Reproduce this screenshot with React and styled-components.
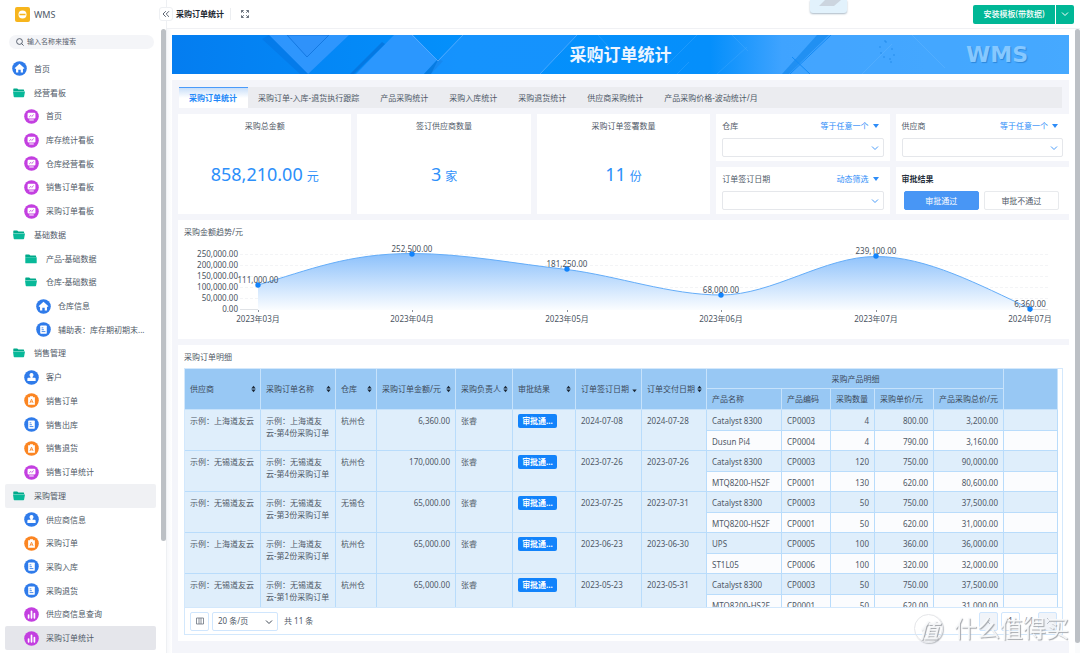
import React from "react";
import styled, { createGlobalStyle, css } from "styled-components";

const GlobalStyle = createGlobalStyle`
  *, *::before, *::after { box-sizing: border-box; }
  body {
    margin: 0;
    background: #fff;
    color: #4f5967;
    font: 8px/12px "Noto Sans", "Noto Sans CJK SC", sans-serif;
  }
  button, select, input { font: inherit; color: inherit; margin: 0; }
  button { cursor: pointer; }
  a { color: inherit; text-decoration: none; }
  svg { display: block; flex: none; }
  h1, h2, p { margin: 0; font-size: inherit; font-weight: inherit; }
`;

const Shell = styled.div`
  display: flex;
  height: 100vh;
  overflow: hidden;
`;

/* ---------- sidebar ---------- */
const Sidebar = styled.aside`
  display: flex;
  flex: none;
  width: 167px;
  border-right: 1px solid #eef0f3;
`;
const SideBody = styled.div`
  display: flex;
  flex-direction: column;
  flex: 1;
  min-width: 0;
  padding: 0 5px 3px;
`;
const Brand = styled.div`
  display: flex;
  align-items: center;
  gap: 4px;
  height: 29px;
  padding-left: 10px;
  font-size: 9px;
  flex: none;
`;
const SearchBox = styled.label`
  display: flex;
  align-items: center;
  gap: 3px;
  flex: none;
  height: 14px;
  margin: 6px 2px 8px 4px;
  padding: 0 7px;
  border-radius: 7px;
  background: #f4f5f8;
`;
const SearchInput = styled.input`
  flex: 1;
  min-width: 0;
  padding: 0;
  border: 0;
  outline: 0;
  background: none;
  font-size: 7px;
  line-height: 12px;
  &::placeholder { color: #59626e; opacity: 1; }
`;
const Nav = styled.nav`
  display: flex;
  flex-direction: column;
  flex: 1;
  min-height: 0;
`;
const NavItem = styled.a`
  display: flex;
  align-items: center;
  flex: 1 1 0;
  gap: 7px;
  padding-left: ${(p) => 7 + p.$level * 12}px;
  border-radius: 2px;
  background: ${(p) => p.$bg || "transparent"};
  white-space: nowrap;
`;
const Track = styled.div`
  flex: none;
  width: 5px;
  padding-top: 29px;
`;
const Thumb = styled.div`
  height: ${(p) => p.$size};
  border-radius: 3px;
  background: #bcc0c5;
`;

/* ---------- main ---------- */
const Main = styled.main`
  display: flex;
  flex-direction: column;
  flex: 1;
  min-width: 0;
`;
const TopBar = styled.header`
  position: relative;
  display: flex;
  align-items: center;
  flex: none;
  height: 29px;
  padding: 0 6px 0 9px;
  border-bottom: 1px solid #f0f1f4;
`;
const Collapse = styled.button`
  position: absolute;
  left: -8px;
  top: 7px;
  display: grid;
  place-items: center;
  width: 14px;
  height: 14px;
  padding: 0;
  border: 1px solid #eef0f3;
  border-radius: 3px;
  background: #fff;
`;
const PageName = styled.h1`
  padding-right: 6px;
  border-right: 1px solid #eceef1;
  color: #1c2530;
  font-weight: 700;
`;
const PlainButton = styled.button`
  display: flex;
  padding: 0;
  border: 0;
  background: none;
  margin-left: 10px;
`;
const Pull = styled.div`
  position: absolute;
  left: 643px;
  top: 0;
  width: 37px;
  height: 13px;
  border-radius: 0 0 3px 3px;
  background: #e2f2fc;
  box-shadow: 0 1px 2px #aab9c6;
`;
const Install = styled.div`
  display: flex;
  gap: 1px;
  margin-left: auto;
`;
const GreenButton = styled.button`
  display: grid;
  place-items: center;
  width: ${(p) => p.$w}px;
  height: 19px;
  padding: 0;
  border: 0;
  border-radius: ${(p) => p.$radius};
  background: #00b796;
  color: #fff;
  font-weight: 500;
`;
const Scroller = styled.div`
  display: flex;
  flex: 1;
  min-height: 0;
`;
const Content = styled.div`
  display: flex;
  flex-direction: column;
  flex: 1;
  min-width: 0;
  padding: 6px 6px 0 5px;
  background: linear-gradient(90deg, #f7f8fb, #fff 5px);
`;
const RightTrack = styled.div`
  flex: none;
  width: 5px;
  padding-bottom: 10px;
  background: #fafbfc;
`;
const Banner = styled.section`
  position: relative;
  display: grid;
  place-items: center;
  flex: none;
  height: 39px;
  overflow: hidden;
  background: linear-gradient(90deg, #047df0, #0490fb 32%, #058ffb 60%, #3fa3ff 68%, #47adff);
`;
const BannerArt = styled.svg`
  position: absolute;
  inset: 0;
  width: 100%;
  height: 100%;
`;
const BannerTitle = styled.h2`
  position: relative;
  color: #edf5ff;
  font-size: 17px;
  line-height: 24px;
  font-weight: 700;
`;
const BannerMark = styled.span`
  position: absolute;
  right: 41px;
  top: 8px;
  color: #86c8ff;
  font: 700 22px/24px "DejaVu Sans", sans-serif;
  text-shadow: 1px 1px 1px #2b87dc;
`;
const Board = styled.div`
  display: flex;
  flex-direction: column;
  flex: 1;
  min-height: 0;
  gap: 6px;
  margin-top: 6px;
  padding: 7px 0 12px 6px;
  background: #f4f5fa;
`;
const Tabs = styled.div`
  display: flex;
  flex: none;
  height: 21px;
  margin: 0 7px 0 1px;
  background: #ebecf0;
`;
const Tab = styled.button`
  padding: 0 11px 0 10px;
  border: 0;
  background: none;
  white-space: nowrap;
  ${(p) =>
    p.$active &&
    css`
      border-top: 1px solid #4b9bfa;
      background: linear-gradient(#c9dff9, #fff 10px);
      color: #2388f8;
      font-weight: 700;
    `}
`;
const Summary = styled.div`
  display: grid;
  flex: none;
  grid-template-columns: repeat(5, minmax(0, 1fr));
  grid-template-rows: 47px 47px;
  gap: 6px;
`;
const Card = styled.section`
  background: #fff;
  min-width: 0;
`;
const StatCard = styled(Card)`
  grid-row: span 2;
  padding-top: 6px;
  text-align: center;
`;
const StatValue = styled.p`
  margin-top: 30px;
  color: #2d8ffa;
  font-size: 18px;
  line-height: 24px;
`;
const Unit = styled.span`
  margin-left: 4px;
  font-size: 12px;
`;
const FilterCard = styled(Card)`
  padding: 6px 6px 0;
`;
const FilterHead = styled.div`
  display: flex;
  justify-content: space-between;
  align-items: center;
  height: 12px;
  margin-bottom: 6px;
  font-weight: ${(p) => (p.$strong ? 700 : 400)};
  color: ${(p) => (p.$strong ? "#27303c" : "inherit")};
`;
const Mode = styled.button`
  display: flex;
  align-items: center;
  gap: 4px;
  padding: 0 5px 0 0;
  border: 0;
  background: none;
  color: #2d8cf8;
`;
const SelectWrap = styled.div`
  position: relative;
  width: ${(p) => p.$w || "100%"};
  > svg { position: absolute; right: 5px; top: 6px; pointer-events: none; }
`;
const Select = styled.select`
  display: block;
  width: 100%;
  height: 19px;
  padding: 0 5px;
  border: 1px solid ${(p) => p.$line || "#e5e7eb"};
  border-radius: 2px;
  background: #fff;
  appearance: none;
`;
const Choices = styled.div`
  display: grid;
  grid-template-columns: 1fr 1fr;
  gap: 5px;
  padding: 0 4px 0 2px;
`;
const Choice = styled.button`
  height: 19px;
  padding: 0;
  border: 1px solid ${(p) => (p.$on ? "#4896f5" : "#e8eaed")};
  border-radius: 2px;
  background: ${(p) => (p.$on ? "#4896f5" : "#fff")};
  color: ${(p) => (p.$on ? "#fff" : "inherit")};
`;
const ChartCard = styled(Card)`
  flex: none;
`;
const CardTitle = styled.h2`
  padding: 6px 6px 0;
  height: 23px;
`;
const Chart = styled.svg`
  width: 100%;
  height: auto;
`;
const DetailCard = styled(Card)`
  display: flex;
  flex-direction: column;
  flex: 1;
  min-height: 0;
  padding: 0 6px 6px;
  h2 { padding-left: 0; flex: none; }
`;
const TableFrame = styled.div`
  display: flex;
  flex-direction: column;
  flex: 1;
  min-height: 0;
  border: 1px solid #d3e8fc;
`;
const TableScroll = styled.div`
  flex: 1;
  min-height: 0;
  padding-right: 4px;
  overflow: hidden;
`;
const Table = styled.table`
  width: 100%;
  table-layout: fixed;
  border-collapse: separate;
  border-spacing: 0;
`;
const Row = styled.tr`
  height: ${(p) => p.$h}px;
`;
const Th = styled.th`
  padding: 0 4px 0 5px;
  border-right: 1px solid #c6e2fb;
  border-bottom: 1px solid #c6e2fb;
  background: #98c8f4;
  color: #3c4a5b;
  font-weight: 400;
  text-align: ${(p) => (p.$center ? "center" : "left")};
  white-space: nowrap;
`;
const ThInner = styled.div`
  display: flex;
  align-items: center;
  justify-content: space-between;
`;
const Td = styled.td`
  padding: ${(p) => (p.$tag ? 4 : 5)}px 5px 0;
  border-right: 1px solid #b9dcfb;
  border-bottom: 1px solid #b9dcfb;
  background: ${(p) => (p.$light ? "#fbfcfe" : "#dfeefb")};
  text-align: ${(p) => (p.$num ? "right" : "left")};
  vertical-align: top;
  white-space: nowrap;
`;
const Tag = styled.span`
  display: grid;
  place-items: center;
  width: 39px;
  height: 14px;
  border-radius: 2px;
  background: #1283fb;
  color: #fff;
  font-weight: 700;
`;
const Footer = styled.div`
  display: flex;
  align-items: center;
  flex: none;
  gap: 3px;
  height: 27px;
  padding: 0 5px;
  border-top: 1px solid #d3e8fc;
`;
const PageButton = styled.button`
  display: grid;
  place-items: center;
  width: 19px;
  height: 19px;
  padding: 0;
  border: 1px solid #d0e6fd;
  border-radius: 2px;
  background: ${(p) => (p.$soft ? "#f1f4f9" : "#fff")};
`;
const Total = styled.span`
  margin: 0 auto 0 3px;
`;
const PageCount = styled.span`
  width: 12px;
  text-align: center;
  color: #8a929c;
`;
const Watermark = styled.div`
  position: fixed;
  right: 11px;
  bottom: 9px;
  display: flex;
  align-items: center;
  gap: 11px;
  color: rgba(250, 251, 252, 0.9);
  font-size: 23px;
  line-height: 32px;
  text-shadow: 1px 1px 1px #a3a6ab;
  pointer-events: none;
`;
const Seal = styled.span`
  display: grid;
  place-items: center;
  width: 29px;
  height: 29px;
  border: 1px solid #e4e5e8;
  border-radius: 50%;
  box-shadow: 1px 1px 1px #bfc2c7;
  font-size: 20px;
  font-style: italic;
  font-weight: 700;
`;

/* ---------- icons ---------- */
const COLORS = { home: "#2f7bea", screen: "#c33fe0", doc: "#2f7bea", person: "#2f7bea", order: "#fb8522", bars: "#c33fe0" };
const GLYPHS = {
  home: <path d="M8 3 3 7.400v.8h1.300v4h2.400V9.400h2.600v2.800h2.400v-4H13v-.8Z" fill="#fff" />,
  screen: (
    <>
      <rect x="3.800" y="4" width="8.400" height="6.200" rx="1.200" fill="#fff" />
      <path d="M5.600 11.700h4.800" stroke="#fff" strokeWidth="1.100" />
      <path d="m5.600 8.400 1.700-1.500 1 1 2.100-2" stroke="#c33fe0" strokeWidth=".9" fill="none" />
    </>
  ),
  doc: (
    <>
      <rect x="4.500" y="3.600" width="7" height="8.800" rx=".8" fill="#fff" />
      <path d="M6 6.200h1.800M6 8.200h2.400M6 10.200h4" stroke="#2f7bea" strokeWidth=".9" />
    </>
  ),
  person: (
    <path d="M8 3.200a2.100 2.100 0 0 0-1.500 3.600l.4.600v.9H4.600q-1 0-1 1v2.400h8.800V9.300q0-1-1-1H9.100v-.9l.4-.6A2.100 2.100 0 0 0 8 3.200Z" fill="#fff" />
  ),
  order: (
    <>
      <path d="M4.400 4.400h2v-.9h3.200v.9h2v8H4.400Z" fill="#fff" />
      <path d="m6.300 10.600 1.700-4 1.700 4M7 9.400h2" stroke="#fb8522" strokeWidth=".9" fill="none" />
    </>
  ),
  bars: <path d="M4.900 8.500v3M8 4.600v6.900M11.100 7v4.500" stroke="#fff" strokeWidth="1.800" strokeLinecap="round" />,
};
function NavIcon({ kind }) {
  if (kind === "folder" || kind === "closed") {
    return (
      <svg width="15" height="14" viewBox="0 0 15 14">
        <path d="M1.300 3q0-.6.6-.6h3.300l1.200 1.200h5.100q.6 0 .6.600v1H1.300Z" fill="#00a98a" />
        {kind === "folder" ? (
          <path d="M1 5.600h12l-.9 5q-.1.600-.7.600H2.400q-.6 0-.7-.6Z" fill="#08b999" />
        ) : (
          <path d="M1.300 5.200h11.400v5.600q0 .5-.5.500H1.800q-.5 0-.5-.5Z" fill="#08b999" />
        )}
      </svg>
    );
  }
  return (
    <svg width="15" height="15" viewBox="0 0 16 16">
      <circle cx="8" cy="8" r="7.800" fill={COLORS[kind]} />
      {GLYPHS[kind]}
    </svg>
  );
}
const Chevron = ({ color = "#4a9cf9" }) => (
  <svg width="8" height="8" viewBox="0 0 8 8">
    <path d="m1 2.500 3 3 3-3" fill="none" stroke={color} strokeWidth="1" />
  </svg>
);
const PageArrow = ({ d }) => (
  <svg width="8" height="8" viewBox="0 0 8 8">
    <path d={d} fill="none" stroke="#b9bfc7" strokeWidth="1" />
  </svg>
);
const Sort = ({ down }) => (
  <svg width="5" height="8" viewBox="0 0 5 8">
    {!down && <path d="M.3 3.400 2.500.8l2.200 2.600Z" fill="#1c2735" />}
    <path d="M.3 4.600h4.400L2.500 7.200Z" fill="#1c2735" />
  </svg>
);

/* ---------- data ---------- */
const NAV = [
  [0, "home", "首页"], [0, "folder", "经营看板"], [1, "screen", "首页"], [1, "screen", "库存统计看板"],
  [1, "screen", "仓库经营看板"], [1, "screen", "销售订单看板"], [1, "screen", "采购订单看板"],
  [0, "folder", "基础数据"], [1, "closed", "产品-基础数据"], [1, "folder", "仓库-基础数据"],
  [2, "home", "仓库信息"], [2, "doc", "辅助表：库存期初期末..."], [0, "folder", "销售管理"],
  [1, "person", "客户"], [1, "order", "销售订单"], [1, "doc", "销售出库"], [1, "order", "销售退货"],
  [1, "screen", "销售订单统计"], [0, "folder", "采购管理", "#f0f1f4"], [1, "person", "供应商信息"],
  [1, "order", "采购订单"], [1, "doc", "采购入库"], [1, "doc", "采购退货"], [1, "bars", "供应商信息查询"],
  [1, "bars", "采购订单统计", "#e5e6eb"],
];
const TABS = ["采购订单统计", "采购订单-入库-退货执行跟踪", "产品采购统计", "采购入库统计", "采购退货统计", "供应商采购统计", "产品采购价格-波动统计/月"];
const STATS = [["采购总金额", "858,210.00", "元"], ["签订供应商数量", "3", "家"], ["采购订单签署数量", "11", "份"]];
const POINTS = [
  [80, 42, "111,000.00", "2023年03月"], [234, 11, "252,500.00", "2023年04月"], [389, 26, "181,250.00", "2023年05月"],
  [543, 52, "68,000.00", "2023年06月"], [698, 13, "239,100.00", "2023年07月"], [852, 66, "6,360.00", "2024年07月"],
];
const TICKS = ["250,000.00", "200,000.00", "150,000.00", "100,000.00", "50,000.00", "0.00"];
const LINE = "M80 42C131 27 170 10.500 234 10.500C286 10.500 338 21 389 26.500C440 33 492 52 543 52C595 52 646 13.500 698 13.500C749 13.500 801 42 852 65.500";
const COLS = [76, 75, 41, 79, 57, 63, 66, 65, 75, 49, 44, 59, 70];
const HEADS = ["供应商", "采购订单名称", "仓库", "采购订单金额/元", "采购负责人", "审批结果", "订单签订日期", "订单交付日期"];
const SUBHEADS = ["产品名称", "产品编码", "采购数量", "采购单价/元", "产品采购总价/元"];
const ORDERS = [
  ["上海", 4, "杭州仓", "6,360.00", "2024-07-08", "2024-07-28", [["Catalyst 8300", "CP0003", "4", "800.00", "3,200.00"], ["Dusun Pi4", "CP0004", "4", "790.00", "3,160.00"]]],
  ["无锡", 4, "杭州仓", "170,000.00", "2023-07-26", "2023-07-26", [["Catalyst 8300", "CP0003", "120", "750.00", "90,000.00"], ["MTQ8200-HS2F", "CP0001", "130", "620.00", "80,600.00"]]],
  ["无锡", 3, "无锡仓", "65,000.00", "2023-07-25", "2023-07-31", [["Catalyst 8300", "CP0003", "50", "750.00", "37,500.00"], ["MTQ8200-HS2F", "CP0001", "50", "620.00", "31,000.00"]]],
  ["上海", 2, "杭州仓", "65,000.00", "2023-06-23", "2023-06-30", [["UPS", "CP0005", "100", "360.00", "36,000.00"], ["ST1L05", "CP0006", "100", "320.00", "32,000.00"]]],
  ["无锡", 1, "杭州仓", "65,000.00", "2023-05-23", "2023-05-31", [["Catalyst 8300", "CP0003", "50", "750.00", "37,500.00"], ["MTQ8200-HS2F", "CP0001", "50", "620.00", "31,000.00"]]],
];

function Filter({ label, mode }) {
  return (
    <FilterCard>
      <FilterHead>
        <span>{label}</span>
        <Mode type="button">
          {mode}
          <svg width="6" height="4" viewBox="0 0 6 4"><path d="M0 0h6L3 4Z" fill="#2d8cf8" /></svg>
        </Mode>
      </FilterHead>
      <SelectWrap>
        <Select aria-label={label} defaultValue=""><option value="" /></Select>
        <Chevron />
      </SelectWrap>
    </FilterCard>
  );
}

function ProductCells({ item, light }) {
  return (
    <>
      {item.map((v, i) => <Td key={i} $light={light} $num={i > 1}>{v}</Td>)}
      <Td $light={light} />
    </>
  );
}

function BannerBackground() {
  return (
    <BannerArt viewBox="0 0 897 39" preserveAspectRatio="xMidYMid slice" aria-hidden="true">
      <path d="M97 0h80l-41 39Z" fill="#3a9aff" opacity=".8" />
      <path d="M115 0h42l-22 22Z" fill="#2f92fa" stroke="#1479e2" />
      <path d="M90 4 128 39h8L97 0Z" fill="#0575e2" opacity=".6" />
      <path d="M184 39 222 0h19l24 25-13 14Z" fill="#369aff" opacity=".8" />
      <path d="M182 39 213 9l-3-2-32 32Z" fill="#0573dc" opacity=".8" />
      <path d="M252 39 266 24l5 2-12 13Z" fill="#0977dc" opacity=".8" />
      <path d="M266 25 290 0h115l-37 39H259Z" fill="#2696ff" opacity=".5" />
      <path d="m368 39 37-39M240 0l26 26M266 26 291 0" stroke="#64b4ff" opacity=".7" fill="none" />
      <path d="M426 0l18 20M495 30l30-30M560 0l16 16M505 39l12-12M575 12l-30 27" stroke="#55b3ff" opacity=".3" fill="none" />
      <path d="M660 0h237v39H638l-16-16Z" fill="#45a5ff" opacity=".55" />
      <path d="M645 0h12l-40 39h-7Z" fill="#087fe8" opacity=".55" />
      <path d="M659 0 618 39M620 22l18 17" stroke="#138af5" fill="none" />
      <path d="M690 39l30-30M740 0l33 33" stroke="#68b9ff" opacity=".4" />
      <g fill="#1d86e6">
        {[[713, 6], [708, 12], [709, 18], [712, 22], [720, 14], [722, 20], [718, 24], [719, 27], [714, 7]].map(([x, y], i) => (
          <circle key={i} cx={x} cy={y} r=".7" />
        ))}
      </g>
    </BannerArt>
  );
}

function TrendChart() {
  return (
    <Chart viewBox="0 0 891 96" role="img" aria-label="采购金额趋势/元">
      <defs>
        <linearGradient id="area" x1="0" y1="0" x2="0" y2="1">
          <stop offset="0" stopColor="#8bc0fb" />
          <stop offset="1" stopColor="#fbfdff" />
        </linearGradient>
      </defs>
      {TICKS.map((t, i) => (
        <g key={t}>
          <path d={`M62 ${11 + i * 11}.5H870`} stroke={i === 5 ? "#dfe2e6" : "#f3f4f6"} strokeDasharray={i === 5 ? "none" : "3 2"} />
          <text x="60" y={14 + i * 11} textAnchor="end" fill="#4a5462" fontSize="8">{t}</text>
        </g>
      ))}
      <path d={`${LINE}V67H80Z`} fill="url(#area)" />
      <path d={LINE} fill="none" stroke="#64adf9" strokeWidth="1" />
      {POINTS.map(([x, y, value, month]) => (
        <g key={month} fill="#4a5462" fontSize="8" textAnchor="middle">
          <path d={`M${x}.5 67v2`} stroke="#8b929b" />
          <circle cx={x} cy={y} r="2.700" fill="#1283fb" />
          <text x={x} y={y - 2}>{value}</text>
          <text x={x} y="79">{month}</text>
        </g>
      ))}
    </Chart>
  );
}

function OrdersTable() {
  return (
    <Table>
      <colgroup>
        {COLS.map((w, i) => <col key={i} width={w} />)}
        <col />
      </colgroup>
      <thead>
        <Row $h={20}>
          {HEADS.map((h, i) => (
            <Th key={h} rowSpan={2}><ThInner>{h}<Sort down={i === 6} /></ThInner></Th>
          ))}
          <Th colSpan={5} $center>采购产品明细</Th>
          <Th rowSpan={2} />
        </Row>
        <Row $h={21}>{SUBHEADS.map((h) => <Th key={h}>{h}</Th>)}</Row>
      </thead>
      <tbody>
        {ORDERS.map(([city, no, store, amount, signed, due, items], i) => (
          <React.Fragment key={i}>
            <Row $h={21}>
              <Td rowSpan={2}>示例：{city}道友云</Td>
              <Td rowSpan={2}>示例：{city}道友<br />云-第{no}份采购订单</Td>
              <Td rowSpan={2}>{store}</Td>
              <Td rowSpan={2} $num>{amount}</Td>
              <Td rowSpan={2}>张睿</Td>
              <Td rowSpan={2} $tag><Tag>审批通...</Tag></Td>
              <Td rowSpan={2}>{signed}</Td>
              <Td rowSpan={2}>{due}</Td>
              <ProductCells item={items[0]} />
            </Row>
            <Row $h={20}><ProductCells item={items[1]} light /></Row>
          </React.Fragment>
        ))}
      </tbody>
    </Table>
  );
}

export default function App() {
  return (
    <>
      <GlobalStyle />
      <Shell>
        <Sidebar>
          <SideBody>
            <Brand>
              <svg width="15" height="15" viewBox="0 0 15 15">
                <rect width="15" height="15" rx="2" fill="#f7b51d" />
                <circle cx="7.500" cy="7.500" r="4" fill="#fff" />
                <path d="M4.500 7.500h6" stroke="#f7b51d" strokeWidth="1.500" />
              </svg>
              WMS
            </Brand>
            <SearchBox>
              <svg width="8" height="8" viewBox="0 0 8 8" fill="none" stroke="#4a5462" strokeWidth=".9">
                <circle cx="3.500" cy="3.500" r="2.900" /><path d="m5.600 5.600 2 2" />
              </svg>
              <SearchInput aria-label="搜索" placeholder="输入名称来搜索" />
            </SearchBox>
            <Nav>
              {NAV.map(([level, kind, text, bg], i) => (
                <NavItem key={i} href="#" $level={level} $bg={bg}><NavIcon kind={kind} />{text}</NavItem>
              ))}
            </Nav>
          </SideBody>
          <Track><Thumb $size="82%" /></Track>
        </Sidebar>
        <Main>
          <TopBar>
            <Collapse type="button" aria-label="收起">
              <svg width="8" height="8" viewBox="0 0 8 8" fill="none" stroke="#4a5462" strokeWidth=".9">
                <path d="M3.800 1.200 1 4l2.800 2.800M7 1.200 4.200 4 7 6.800" />
              </svg>
            </Collapse>
            <PageName>采购订单统计</PageName>
            <PlainButton type="button" aria-label="全屏">
              <svg width="8" height="8" viewBox="0 0 8 8" fill="none" stroke="#59626e" strokeWidth=".9">
                <path d="M.5 2.700V.5h2.200M5.300.5h2.200v2.200M7.500 5.300v2.200H5.300M2.700 7.500H.5V5.300M.5.5l2.300 2.300M7.500.5 5.200 2.800M7.500 7.500 5.200 5.200M.5 7.500l2.300-2.300" />
              </svg>
            </PlainButton>
            <Pull><svg width="37" height="12" viewBox="0 0 37 12"><path d="M15 0h16l-7 6H9Z" fill="#ccd5df" /></svg></Pull>
            <Install>
              <GreenButton type="button" $w={82} $radius="2px 0 0 2px">安装模板(带数据)</GreenButton>
              <GreenButton type="button" $w={18} $radius="0 2px 2px 0" aria-label="更多"><Chevron color="#fff" /></GreenButton>
            </Install>
          </TopBar>
          <Scroller>
            <Content>
              <Banner>
                <BannerBackground />
                <BannerTitle>采购订单统计</BannerTitle>
                <BannerMark>WMS</BannerMark>
              </Banner>
              <Board>
                <Tabs>{TABS.map((t, i) => <Tab key={t} type="button" $active={i === 0}>{t}</Tab>)}</Tabs>
                <Summary>
                  {STATS.map(([name, value, unit]) => (
                    <StatCard key={name}>
                      <h2>{name}</h2>
                      <StatValue>{value}<Unit>{unit}</Unit></StatValue>
                    </StatCard>
                  ))}
                  <Filter label="仓库" mode="等于任意一个" />
                  <Filter label="供应商" mode="等于任意一个" />
                  <Filter label="订单签订日期" mode="动态筛选" />
                  <FilterCard>
                    <FilterHead $strong>审批结果</FilterHead>
                    <Choices>
                      <Choice type="button" $on>审批通过</Choice>
                      <Choice type="button">审批不通过</Choice>
                    </Choices>
                  </FilterCard>
                </Summary>
                <ChartCard>
                  <CardTitle>采购金额趋势/元</CardTitle>
                  <TrendChart />
                </ChartCard>
                <DetailCard>
                  <CardTitle>采购订单明细</CardTitle>
                  <TableFrame>
                    <TableScroll><OrdersTable /></TableScroll>
                    <Footer>
                      <PageButton type="button" aria-label="列设置">
                        <svg width="8" height="8" viewBox="0 0 8 8" fill="none" stroke="#6a727d" strokeWidth=".8">
                          <path d="M.5 1h7v6h-7ZM3 1v6M5 1v6" />
                        </svg>
                      </PageButton>
                      <SelectWrap $w="66px">
                        <Select $line="#d0e6fd" aria-label="每页条数"><option>20 条/页</option></Select>
                        <Chevron color="#3f4854" />
                      </SelectWrap>
                      <Total>共 11 条</Total>
                      <PageButton type="button" $soft aria-label="上一页"><PageArrow d="M5 1 2 4l3 3" /></PageButton>
                      <PageButton type="button">1</PageButton>
                      <PageCount>/ 1</PageCount>
                      <PageButton type="button" $soft aria-label="下一页"><PageArrow d="m3 1 3 3-3 3" /></PageButton>
                    </Footer>
                  </TableFrame>
                </DetailCard>
              </Board>
            </Content>
            <RightTrack><Thumb $size="100%" /></RightTrack>
          </Scroller>
        </Main>
      </Shell>
      <Watermark><Seal>值</Seal>什么值得买</Watermark>
    </>
  );
}
